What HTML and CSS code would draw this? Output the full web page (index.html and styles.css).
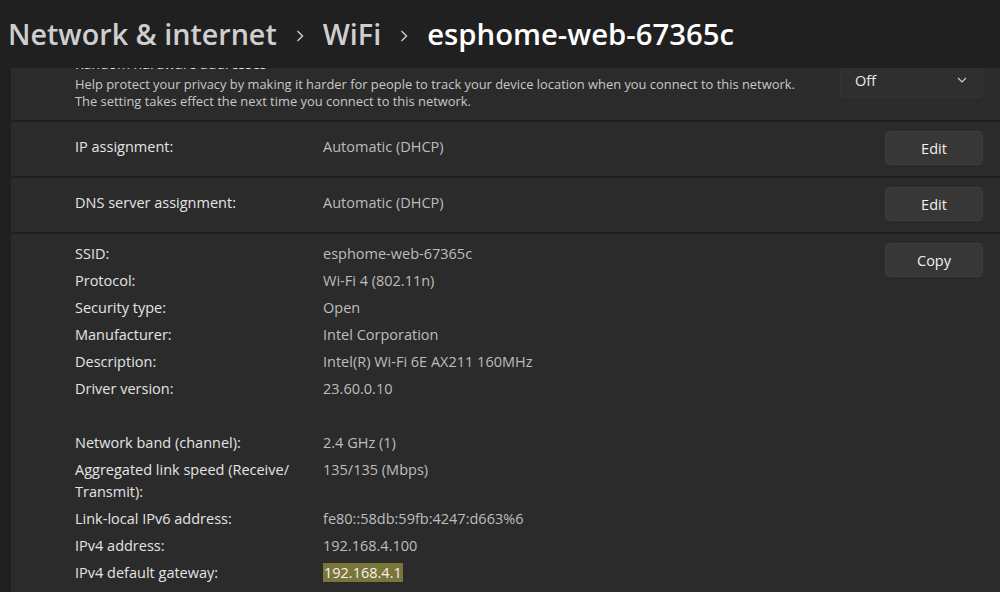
FILE: index.html
```html
<!DOCTYPE html>
<html lang="en">
<head>
    <meta charset="UTF-8">
    <meta name="viewport" content="width=device-width, initial-scale=1.0">
    <title>esphome-web-67365c</title>
    <link rel="stylesheet" href="styles.css">
</head>
<body>
    <header class="crumbs">
        <span class="crumb">Network &amp; internet</span>
        <svg class="crumb-sep" width="8" height="14" viewBox="0 0 8 14"><path d="M1.5 2 L6.5 7 L1.5 12" fill="none" stroke="#cfcfcf" stroke-width="1.4"/></svg>
        <span class="crumb">WiFi</span>
        <svg class="crumb-sep" width="8" height="14" viewBox="0 0 8 14"><path d="M1.5 2 L6.5 7 L1.5 12" fill="none" stroke="#cfcfcf" stroke-width="1.4"/></svg>
        <span class="crumb current">esphome-web-67365c</span>
    </header>

    <main class="panel">
        <div class="cards">
            <!-- partly scrolled out of view -->
            <section class="card card-random">
                <div class="card-text">
                    <div class="card-title">Random hardware addresses</div>
                    <div class="card-desc">Help protect your privacy by making it harder for people to track your device location when you connect to this network.<br>The setting takes effect the next time you connect to this network.</div>
                </div>
                <div class="select">
                    <span>Off</span>
                    <svg width="10" height="6" viewBox="0 0 10 6"><path d="M1 1 L5 5 L9 1" fill="none" stroke="#cfcfcf" stroke-width="1.2"/></svg>
                </div>
            </section>

            <section class="card">
                <div class="props">
                    <span class="prop-label">IP assignment:</span>
                    <span class="prop-value">Automatic (DHCP)</span>
                </div>
                <button class="btn">Edit</button>
            </section>

            <section class="card">
                <div class="props">
                    <span class="prop-label">DNS server assignment:</span>
                    <span class="prop-value">Automatic (DHCP)</span>
                </div>
                <button class="btn">Edit</button>
            </section>

            <section class="card card-info">
                <div class="props props-list">
                    <span class="prop-label">SSID:</span><span class="prop-value">esphome-web-67365c</span>
                    <span class="prop-label">Protocol:</span><span class="prop-value">Wi-Fi 4 (802.11n)</span>
                    <span class="prop-label">Security type:</span><span class="prop-value">Open</span>
                    <span class="prop-label">Manufacturer:</span><span class="prop-value">Intel Corporation</span>
                    <span class="prop-label">Description:</span><span class="prop-value">Intel(R) Wi-Fi 6E AX211 160MHz</span>
                    <span class="prop-label">Driver version:</span><span class="prop-value">23.60.0.10</span>
                    <span class="props-gap"></span>
                    <span class="prop-label">Network band (channel):</span><span class="prop-value">2.4 GHz (1)</span>
                    <span class="prop-label">Aggregated link speed (Receive/<br>Transmit):</span><span class="prop-value">135/135 (Mbps)</span>
                    <span class="prop-label">Link-local IPv6 address:</span><span class="prop-value">fe80::58db:59fb:4247:d663%6</span>
                    <span class="prop-label">IPv4 address:</span><span class="prop-value">192.168.4.100</span>
                    <span class="prop-label">IPv4 default gateway:</span><span class="prop-value"><mark class="hl">192.168.4.1</mark></span>
                </div>
                <button class="btn">Copy</button>
            </section>
        </div>
    </main>
</body>
</html>
```

FILE: styles.css
```css
*{
    margin: 0;
    padding: 0;
    box-sizing: border-box;
}
body{
    width: 1000px;
    height: 592px;
    overflow: hidden;
    background: #202020;
    font-family: "Open Sans", "Noto Sans", sans-serif;
    color: #e4e4e4;
}

/* breadcrumb */
.crumbs{
    height: 68px;
    display: flex;
    align-items: center;
    padding: 0 0 0 8px;
    gap: 19px;
}
.crumb{
    font-size: 28.7px;
    font-weight: 600;
    color: #cfcfcf;
    line-height: 36px;
}
.crumb.current{
    color: #ffffff;
    font-size: 29.3px;
}
.crumb-sep{
    margin-top: 3px;
}

/* cards */
.panel{
    height: 524px;
    overflow: hidden;
    padding-left: 11px;
}
.cards{
    display: flex;
    flex-direction: column;
    gap: 2px;
}
.card{
    background: #2b2b2b;
    display: flex;
    align-items: center;
    justify-content: space-between;
    min-height: 54px;
    padding: 0 17px 0 64px;
}
.card-random{
    margin-top: -26px;
    padding-top: 12px;
    padding-bottom: 10px;
}
.card-title{
    font-size: 14px;
    line-height: 20px;
    color: #e4e4e4;
}
.card-desc{
    font-size: 12.9px;
    line-height: 17px;
    color: #c8c8c8;
    margin-top: 2px;
}
.select{
    width: 143px;
    height: 31px;
    background: #2f2f2f;
    border: 1px solid #343434;
    border-radius: 4px;
    display: flex;
    align-items: center;
    justify-content: space-between;
    padding: 0 15px 4px 14px;
    font-size: 14.5px;
    color: #e8e8e8;
}

.props{
    display: grid;
    grid-template-columns: 248px auto;
    font-size: 14.5px;
    line-height: 22px;
}
.card > .props{
    margin-top: -4px;
}
.prop-label{
    color: #e4e4e4;
}
.prop-value{
    color: #bdbdbd;
}
.props-list .prop-label,
.props-list .prop-value{
    padding: 2px 0 3px;
}
.props-gap{
    grid-column: 1 / 3;
    height: 27px;
}
.hl{
    background: #7a7538;
    color: #f2f2f2;
    padding: 0 1px;
}

.btn{
    width: 98px;
    height: 34px;
    background: #373737;
    border: 1px solid #3d3d3d;
    border-radius: 4px;
    color: #f0f0f0;
    font-family: inherit;
    font-size: 14.5px;
    margin-top: -2px;
}

.card-info{
    align-items: flex-start;
    padding-top: 7px;
    padding-bottom: 20px;
}
.card-info > .props{
    margin-top: 0;
}
.card-info .btn{
    margin-top: 2px;
}
```
